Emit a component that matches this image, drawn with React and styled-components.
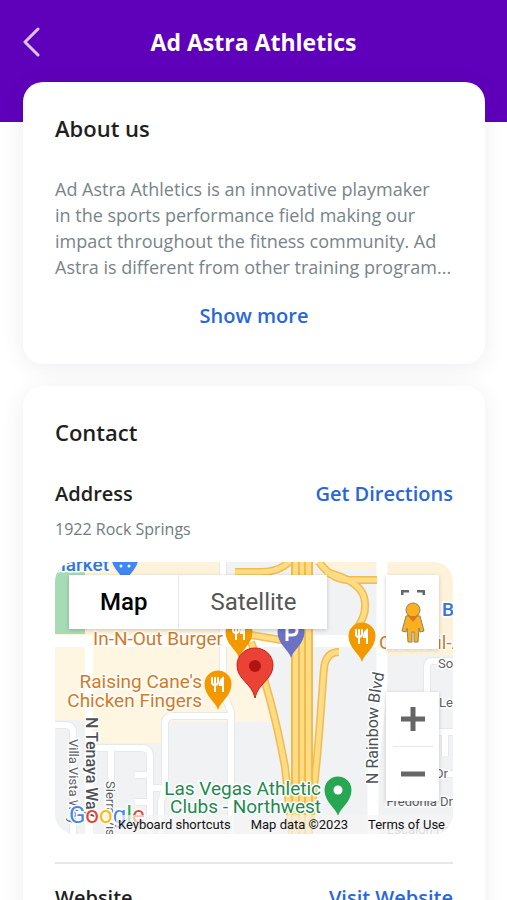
import React from "react";
import styled, { createGlobalStyle } from "styled-components";

const GlobalStyle = createGlobalStyle`
  * {
    box-sizing: border-box;
  }
  body {
    margin: 0;
    background: #fff;
    color: #1f1f21;
    font-family: "Open Sans", "Noto Sans", sans-serif;
  }
  h1,
  h2,
  h3,
  p {
    margin: 0;
  }
  button {
    padding: 0;
    border: 0;
    background: none;
    color: inherit;
    font: inherit;
    cursor: pointer;
  }
`;

const Header = styled.header`
  display: grid;
  grid-template-columns: 32px 1fr 32px;
  align-items: center;
  height: 122px;
  padding: 0 16px 38px;
  background: #5f00ba;
`;

const BackButton = styled.button`
  display: flex;
  justify-content: center;
  color: #dcc4f2;
`;

const Title = styled.h1`
  color: #fff;
  font-size: 23px;
  font-weight: 700;
  line-height: 32px;
  text-align: center;
`;

const Main = styled.main`
  display: flex;
  flex-direction: column;
  gap: 22px;
  margin-top: -40px;
  padding: 0 22px 22px 23px;
`;

const Card = styled.section`
  padding: 30px 32px 32px;
  border-radius: 20px;
  background: #fff;
  box-shadow: 0 4px 24px rgba(20, 20, 60, 0.07);
`;

const CardTitle = styled.h2`
  font-size: 22px;
  font-weight: 600;
  line-height: 32px;
`;

const Description = styled.p`
  margin-top: 32px;
  color: #788488;
  font-size: 18px;
  line-height: 26px;
`;

const ShowMore = styled.button`
  display: block;
  margin: 20px auto 0;
  color: #2766dc;
  font-size: 20px;
  font-weight: 600;
  line-height: 32px;
`;

const Row = styled.div`
  display: flex;
  justify-content: space-between;
  margin-top: ${(props) => (props.$first ? 30 : 18)}px;
  font-size: 20px;
  line-height: 32px;
`;

const RowLabel = styled.h3`
  font-size: 20px;
  font-weight: 600;
`;

const RowLink = styled.a`
  color: #2766dc;
  font-weight: 600;
  text-decoration: none;
`;

const RowValue = styled.p`
  margin-top: 7px;
  color: #727c80;
  font-size: 16px;
  font-weight: 500;
  line-height: 24px;
`;

const Divider = styled.hr`
  height: 2px;
  margin: 28px 0 0;
  border: 0;
  background: #e8e8ea;
`;

const MapFrame = styled.div`
  position: relative;
  height: 272px;
  margin-top: 21px;
  overflow: hidden;
  border-radius: 20px;
  font-family: Roboto, sans-serif;
`;

const MapCanvas = styled.svg`
  display: block;
  width: 100%;
  height: 100%;
`;

const MapTypes = styled.div`
  position: absolute;
  top: 13px;
  left: 14px;
  display: flex;
  background: #fff;
  box-shadow: 0 1px 4px rgba(0, 0, 0, 0.2);
`;

const MapType = styled.button`
  height: 54px;
  padding: 0 31px;
  color: ${(props) => (props.$active ? "#000" : "#565656")};
  font-size: 24px;
  font-weight: ${(props) => (props.$active ? 500 : 400)};

  & + & {
    border-left: 1px solid #e6e6e6;
  }
`;

const ControlStack = styled.div`
  position: absolute;
  right: 14px;
  ${(props) => (props.$bottom ? "bottom: 33px;" : "top: 13px;")}
  display: flex;
  flex-direction: column;
  align-items: center;
  width: 53px;
  background: #fff;
  box-shadow: 0 1px 4px rgba(0, 0, 0, 0.2);
`;

const ControlButton = styled.button`
  display: flex;
  align-items: ${(props) => props.$align || "center"};
  justify-content: center;
  width: 40px;
  height: ${(props) => props.$height}px;
  border-top: ${(props) => (props.$line ? "1px solid #e6e6e6" : "0")};
`;

const Attribution = styled.div`
  position: absolute;
  right: 0;
  bottom: 0;
  display: flex;
  gap: 20px;
  padding: 0 8px 0 2px;
  background: rgba(245, 245, 245, 0.7);
  color: #111;
  font-size: 13px;
  line-height: 19px;

  a {
    color: inherit;
    text-decoration: none;
  }
`;

const PlaceText = styled.text`
  fill: ${(props) => props.$color};
  stroke: #fff;
  stroke-width: 3px;
  stroke-linejoin: round;
  paint-order: stroke;
  font-size: ${(props) => props.$size || 19}px;
  font-weight: ${(props) => props.$weight || 400};
`;

const FOOD = "#d27a24";
const STREET = "#5c6066";
const PARK = "#218a4b";

const minorRoads = [
  "M0 163H10Q18 163 18 171V272",
  "M38 186H86Q95 186 95 195V272",
  "M56 186V272",
  "M80 213H95",
  "M95 226H110",
  "M80 240H95",
  "M168 0V130L176 150V272",
  "M175 154H118Q110 154 110 162V226L106 240V272",
  "M398 99H378Q372 99 372 105V140",
  "M332 212H398",
  "M384 170H398",
  "M390 170V194",
];

const highways = [
  "M196 80C210 115 220 150 230 205L237 272",
  "M284 90Q271 90 269 106C266 145 264 180 260 216L254 272",
  "M180 10H205Q224 10 234 0",
  "M264 0Q276 17 292 18H322",
  "M270 10Q304 18 309 35Q314 54 297 72",
  "M196 73L238 80",
];

const pins = [
  { x: 184, y: 71, color: "#f29900", kind: "food" },
  { x: 163, y: 123, color: "#f29900", kind: "food" },
  { x: 307, y: 75, color: "#f29900", kind: "food" },
  { x: 236, y: 71, color: "#6b72c5", kind: "parking" },
  { x: 283, y: 229, color: "#28a752", kind: "park" },
  { x: 70, y: -4, color: "#4285f4", kind: "shop" },
];

const Pin = ({ x, y, color, kind }) => (
  <g transform={`translate(${x} ${y})`}>
    <path
      d="M0 25C-2 17-13.500 11-13.500-1A13.500 13.500 0 0 1 13.500-1C13.500 11 2 17 0 25Z"
      fill={color}
    />
    {kind === "food" && (
      <g fill="none" stroke="#fff" strokeWidth="2">
        <path d="M-6-8V-3Q-6 0-3 0Q0 0 0-3V-8M-3-8V7" />
        <path d="M5 7V-7Q2-5 2 0H5" fill="#fff" />
      </g>
    )}
    {kind === "parking" && (
      <path
        d="M-4 8V-7H1Q6-7 6-2.500Q6 2 1 2H-4"
        fill="none"
        stroke="#fff"
        strokeWidth="3"
      />
    )}
    {kind === "park" && <circle cy="-1" r="4.500" fill="#fff" />}
    {kind === "shop" && (
      <g fill="#fff">
        <circle cx="-4" cy="8" r="1.500" />
        <circle cx="4" cy="8" r="1.500" />
      </g>
    )}
  </g>
);

const MapDrawing = () => (
  <MapCanvas viewBox="0 0 398 272" preserveAspectRatio="xMidYMid slice">
    <rect width="398" height="272" fill="#f0f2f4" />
    <path d="M0 0H165V75H0Z" fill="#fef3da" />
    <path d="M0 84H196L216 160H106V181H32V158H0Z" fill="#fef6e0" />
    <path d="M264 0H320V8H270ZM332 0H398V93H332Z" fill="#fef3da" />
    <path d="M0 10H30V72H0Z" fill="#a7dbb5" />
    <g fill="none">
      {minorRoads.map((d) => (
        <path key={d} d={d} stroke="#e6e9ec" strokeWidth="8" />
      ))}
      {minorRoads.map((d) => (
        <path key={d} d={d} stroke="#fff" strokeWidth="6" />
      ))}
      <path d="M0 79H345" stroke="#fff" strokeWidth="12" />
      <path d="M34 79V272" stroke="#fff" strokeWidth="8" />
      <path d="M327 0V120L318 210V272" stroke="#fff" strokeWidth="11" />
      {highways.map((d) => (
        <path key={d} d={d} stroke="#f2bb4b" strokeWidth="8" />
      ))}
      {highways.map((d) => (
        <path key={d} d={d} stroke="#fddc85" strokeWidth="5" />
      ))}
      <path d="M247 0V272" stroke="#fddc85" strokeWidth="20" />
      <path
        d="M237 0V272M244 0V272M250 0V272M257 0V272"
        stroke="#f2bb4b"
        strokeWidth="2"
      />
    </g>
    <PlaceText x="54" y="9" textAnchor="end" $color="#3476e0" $weight="500">
      Market
    </PlaceText>
    {pins.map((pin) => (
      <Pin key={`${pin.x}-${pin.y}`} {...pin} />
    ))}
    <PlaceText x="168" y="83" textAnchor="end" $color={FOOD}>
      In-N-Out Burger
    </PlaceText>
    <PlaceText x="147" y="126" textAnchor="end" $color={FOOD}>
      Raising Cane's
    </PlaceText>
    <PlaceText x="147" y="145" textAnchor="end" $color={FOOD}>
      Chicken Fingers
    </PlaceText>
    <PlaceText x="266" y="233" textAnchor="end" $color={PARK}>
      Las Vegas Athletic
    </PlaceText>
    <PlaceText x="266" y="251" textAnchor="end" $color={PARK}>
      Clubs - Northwest
    </PlaceText>
    <PlaceText x="387" y="54" $color="#3476e0" $weight="500">
      Best
    </PlaceText>
    <PlaceText x="324" y="87" $color={FOOD}>
      Chick-fil-A
    </PlaceText>
    <PlaceText x="383" y="106" $color={STREET} $size="13">
      Solano
    </PlaceText>
    <PlaceText x="384" y="145" $color={STREET} $size="13">
      Leon
    </PlaceText>
    <PlaceText x="393" y="216" textAnchor="end" $color={STREET} $size="13">
      Dr
    </PlaceText>
    <PlaceText x="398" y="244" textAnchor="end" $color={STREET} $size="13">
      Fredonia Dr
    </PlaceText>
    <PlaceText x="332" y="272" $color="#a2a5aa" $size="13">
      Escalon Dr
    </PlaceText>
    <PlaceText
      transform="translate(31 155) rotate(90)"
      $color="#4d5156"
      $size="16"
      $weight="500"
    >
      N Tenaya Way
    </PlaceText>
    <PlaceText transform="translate(14 177) rotate(90)" $color={STREET} $size="13">
      Villa Vista Way
    </PlaceText>
    <PlaceText transform="translate(51 219) rotate(90)" $color={STREET} $size="13">
      Sierra Vista
    </PlaceText>
    <path id="rainbow-blvd" d="M323 222V158Q323 138 332 100" fill="none" />
    <PlaceText $color="#4d5156" $size="16">
      <textPath href="#rainbow-blvd">N Rainbow Blvd</textPath>
    </PlaceText>
    <path
      d="M200 136C197 121 182 118 182 103A18 17 0 0 1 218 103C218 118 203 121 200 136Z"
      fill="#ea4335"
      stroke="#c5221f"
    />
    <circle cx="200" cy="104" r="6" fill="#b31412" />
    <PlaceText x="14" y="261" $size="24">
      <tspan fill="#4285f4">G</tspan>
      <tspan fill="#ea4335">o</tspan>
      <tspan fill="#fbbc04">o</tspan>
      <tspan fill="#4285f4">g</tspan>
      <tspan fill="#34a853">l</tspan>
      <tspan fill="#ea4335">e</tspan>
    </PlaceText>
  </MapCanvas>
);

const AddressMap = () => (
  <MapFrame>
    <MapDrawing />
    <MapTypes>
      <MapType $active>Map</MapType>
      <MapType>Satellite</MapType>
    </MapTypes>
    <ControlStack>
      <ControlButton
        $height={20}
        $align="flex-end"
        aria-label="Toggle fullscreen view"
      >
        <svg width="24" height="5" viewBox="0 0 24 5">
          <path
            d="M1 5V1H8M16 1H23V5"
            fill="none"
            stroke="#666"
            strokeWidth="3"
          />
        </svg>
      </ControlButton>
      <ControlButton $height={54} aria-label="Street View">
        <svg width="24" height="41" viewBox="0 0 24 41">
          <g fill="#fbb01f" stroke="#8b8267" strokeWidth="1">
            <path d="M5 14Q12 12 19 14L23 29L19 30L18 26L17 40H13V30H11V40H7L6 26L5 30L1 29Z" />
            <circle cx="12" cy="8" r="7" />
          </g>
          <path d="M7 14H17L12 20Z" fill="#d9791c" />
        </svg>
      </ControlButton>
    </ControlStack>
    <ControlStack $bottom>
      <ControlButton $height={54} aria-label="Zoom in">
        <svg width="24" height="24" viewBox="0 0 24 24">
          <path d="M12 0V24M0 12H24" stroke="#666" strokeWidth="5" />
        </svg>
      </ControlButton>
      <ControlButton $height={55} $line aria-label="Zoom out">
        <svg width="24" height="24" viewBox="0 0 24 24">
          <path d="M0 12H24" stroke="#666" strokeWidth="5" />
        </svg>
      </ControlButton>
    </ControlStack>
    <Attribution>
      <button>Keyboard shortcuts</button>
      <span>Map data ©2023</span>
      <a href="#terms">Terms of Use</a>
    </Attribution>
  </MapFrame>
);

const App = () => (
  <>
    <GlobalStyle />
    <Header>
      <BackButton aria-label="Back">
        <svg width="18" height="30" viewBox="0 0 18 30">
          <path
            d="M15 2L2 15L15 28"
            fill="none"
            stroke="currentColor"
            strokeWidth="3"
            strokeLinecap="round"
            strokeLinejoin="round"
          />
        </svg>
      </BackButton>
      <Title>Ad Astra Athletics</Title>
    </Header>
    <Main>
      <Card>
        <CardTitle>About us</CardTitle>
        <Description>
          Ad Astra Athletics is an innovative playmaker in&nbsp;the sports
          performance field making our impact throughout the fitness community.
          Ad Astra is different from other training program...
        </Description>
        <ShowMore>Show more</ShowMore>
      </Card>
      <Card>
        <CardTitle>Contact</CardTitle>
        <Row $first>
          <RowLabel>Address</RowLabel>
          <RowLink href="#directions">Get Directions</RowLink>
        </Row>
        <RowValue>1922 Rock Springs</RowValue>
        <AddressMap />
        <Divider />
        <Row>
          <RowLabel>Website</RowLabel>
          <RowLink href="#website">Visit Website</RowLink>
        </Row>
      </Card>
    </Main>
  </>
);

export default App;
